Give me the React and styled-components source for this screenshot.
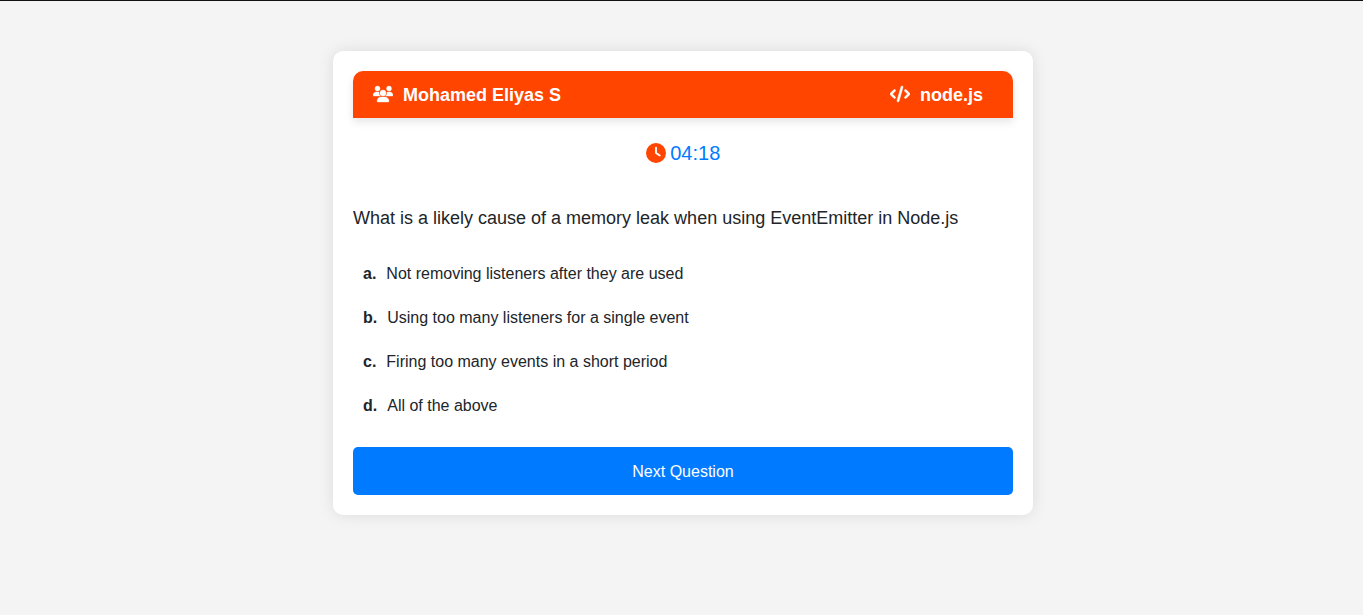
import React from "react";
import styled, { createGlobalStyle } from "styled-components";
import { FaUsers, FaCode, FaClock } from "react-icons/fa6";

const GlobalStyle = createGlobalStyle`
  * { box-sizing: border-box; }
  body {
    margin: 0;
    background: #f4f4f4;
    font-family: "Liberation Sans", Arial, sans-serif;
    color: #212529;
  }
`;

const Page = styled.main`
  min-height: 100vh;
  border-top: 1px solid #111;
  padding: 50px 0 0 3px;
`;

const Card = styled.section`
  width: 700px;
  height: 464px;
  margin: 0 auto;
  padding: 20px;
  background: #fff;
  border-radius: 10px;
  box-shadow: 0 0 15px rgba(0, 0, 0, 0.1);
`;

const Header = styled.header`
  display: flex;
  justify-content: space-between;
  align-items: center;
  height: 47px;
  padding: 0 30px 0 20px;
  background: #ff4500;
  color: #fff;
  border-radius: 10px 10px 0 0;
  box-shadow: 0 4px 8px rgba(0, 0, 0, 0.1);
  font-size: 18px;
  font-weight: 700;
`;

const HeaderItem = styled.div`
  display: flex;
  align-items: center;
  gap: 10px;
  line-height: 27px;

  svg {
    margin-bottom: 1px;
    stroke: currentColor;
    stroke-width: ${({ $weight }) => $weight}px;
  }
`;

const HeaderText = styled.span`
  padding-top: 1px;
`;

const Timer = styled.div`
  display: flex;
  justify-content: center;
  align-items: center;
  gap: 4.5px;
  height: 30px;
  margin-top: 20px;
  font-size: 20px;
  color: #007bff;

  svg {
    color: #ff4500;
    margin-bottom: 1px;
  }
`;

const Question = styled.h1`
  margin: 37px 0 20px;
  font-size: 18px;
  font-weight: 400;
  line-height: 27px;
`;

const Options = styled.ul`
  list-style: none;
  margin: 0;
  padding: 0;
`;

const Option = styled.li`
  display: flex;
  gap: 10px;
  height: 44px;
  padding: 10px;
  line-height: 24px;
  font-size: 16px;
`;

const NextButton = styled.button`
  display: block;
  width: 100%;
  height: 48px;
  margin-top: 19px;
  padding: 1px 0 0;
  border: 0;
  border-radius: 5px;
  background: #007bff;
  color: #fff;
  font: 400 16px "Liberation Sans", Arial, sans-serif;
`;

const options = [
  ["a.", "Not removing listeners after they are used"],
  ["b.", "Using too many listeners for a single event"],
  ["c.", "Firing too many events in a short period"],
  ["d.", "All of the above"],
];

export default function App() {
  return (
    <Page>
      <GlobalStyle />
      <Card>
        <Header>
          <HeaderItem $weight={12}>
            <FaUsers size={20} />
            <HeaderText>Mohamed Eliyas S</HeaderText>
          </HeaderItem>
          <HeaderItem $weight={18}>
            <FaCode size={20} />
            <HeaderText>node.js</HeaderText>
          </HeaderItem>
        </Header>
        <Timer><FaClock size={20} />04:18</Timer>
        <Question>What is a likely cause of a memory leak when using EventEmitter in Node.js</Question>
        <Options>
          {options.map(([letter, text]) => (
            <Option key={letter}><strong>{letter}</strong><span>{text}</span></Option>
          ))}
        </Options>
        <NextButton type="button">Next Question</NextButton>
      </Card>
    </Page>
  );
}
